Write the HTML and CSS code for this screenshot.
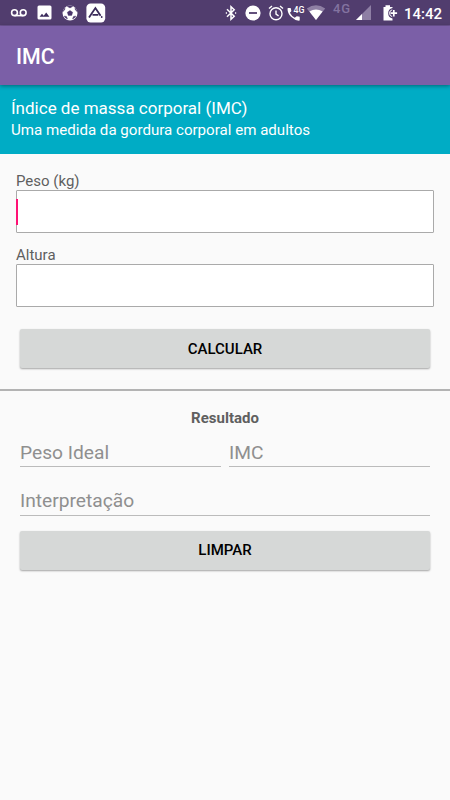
FILE: index.html
```html
<!DOCTYPE html>
<html lang="pt-BR">
<head>
<meta charset="utf-8">
<title>IMC</title>
<link rel="stylesheet" href="styles.css">
</head>
<body>
<div class="status">
  <div class="notifications">
    <svg width="18" height="10" viewBox="0 0 18 10" fill="none" stroke="#fff" stroke-width="1.6"><circle cx="4.500" cy="4.700" r="2.900"/><circle cx="13.200" cy="4.700" r="2.900"/><path d="M4.500 7.600h8.700"/></svg>
    <svg width="15" height="15" viewBox="0 0 15 15"><rect x=".5" y=".5" width="14" height="14" rx="1.5" fill="#fff"/><path d="M2.600 11.800 5 8.800l1.700 2 2.500-3.200 3.200 4.200z" fill="#3c2b5c"/></svg>
    <svg width="16" height="16" viewBox="0 0 16 16"><circle cx="8" cy="8" r="7.500" fill="#fff"/><path d="m8 5.400 2.700 1.900-1 3.100H6.300l-1-3.100zM5.200 1.400 8 2.900l2.800-1.500-2.800-.7zM1 6.500 2.600 5l.5-2.200-1.800 2.400zM15 6.500 13.400 5l-.5-2.200 1.800 2.400zM2.200 11l2.300.4 1 2.500-2-1zM13.800 11l-2.300.4-1 2.500 2-1z" fill="#49346b" stroke="#49346b" stroke-width=".4"/></svg>
    <svg width="20" height="20" viewBox="0 0 20 20"><rect x=".4" y=".4" width="18.800" height="19" rx="4.200" fill="#fff"/><path d="M3 14.500 9.400 5l5.200 7.800M6.500 11.800h5.800" fill="none" stroke="#392a59" stroke-width="1.800"/><circle cx="15.700" cy="14" r=".9" fill="#392a59"/></svg>
  </div>
  <div class="system">
    <svg class="bt" width="12" height="16" viewBox="0 0 12 16" fill="none" stroke="#fff" stroke-width="1.500"><path d="m2 4.300 7.200 7L6 14.300V1.700l3.200 3L2 11.700"/><path d="M.8 8h1.200M10 8h1.200"/></svg>
    <svg class="dnd" width="16" height="16" viewBox="0 0 16 16"><circle cx="8" cy="8" r="7.600" fill="#fff"/><path d="M4 8h8" stroke="#513d6e" stroke-width="1.800"/></svg>
    <svg class="alarm" width="16" height="16" viewBox="0 0 16 16" fill="none" stroke="#fff" stroke-width="1.400"><circle cx="8" cy="8.800" r="6"/><path d="M1 3.500 4 1M12 1l3 2.500M8 5.400v3.800l2.600 1.600"/></svg>
    <svg class="call" width="18" height="18" viewBox="0 0 18 18" fill="#fff"><path d="M1.200 4h2q.6 0 .7.600.1 1 .4 2 .1.400-.2.800L2.900 8.800q1.700 3.300 4.900 4.900l1.500-1.300q.3-.3.800-.2 1 .3 2 .4.600.1.600.7v2.700q0 .7-.7.700Q7.700 16.400 4 12.800.5 9.300.5 4.700.5 4 1.200 4z"/><text class="badge4g" x="6.500" y="9">4G</text></svg>
    <svg class="wifi" width="20" height="16" viewBox="0 0 20 16"><path d="M.8 3.500Q10-3 19.200 3.500L10 15z" fill="#8e7fa4"/><path d="M3.400 6.500Q10 2.500 16.600 6.500L10 15z" fill="#fff"/></svg>
    <span class="network">4G</span>
    <svg class="signal" width="15" height="15" viewBox="0 0 15 15"><path d="M0 15 15 0v15z" fill="#8e7fa4"/><path d="m0 15 6-6v6z" fill="#fff"/></svg>
    <svg class="battery" width="15" height="16" viewBox="0 0 15 16"><path d="M.5 2h2V.3h4.500V2h2.500v1A5.300 5.300 0 0 0 5.200 8.200 5.300 5.300 0 0 0 9.500 13.400v2.100h-9z" fill="#fff"/><path d="M9.200 4.800a3.500 3.500 0 0 0 0 6.800" fill="none" stroke="#fff" stroke-width="1"/><path d="M10.800 4.900v6.600M7.500 8.200h6.600" fill="none" stroke="#fff" stroke-width="1.700"/></svg>
    <span class="clock">14:42</span>
  </div>
</div>
<header class="appbar"><h1>IMC</h1></header>
<section class="banner">
  <h2>Índice de massa corporal (IMC)</h2>
  <p>Uma medida da gordura corporal em adultos</p>
</section>
<main>
  <section class="form">
    <label>Peso (kg)</label>
    <div class="field"><span class="caret"></span></div>
    <label class="second">Altura</label>
    <div class="field"></div>
    <button class="calc">CALCULAR</button>
  </section>
  <div class="divider"></div>
  <section class="result">
    <h3>Resultado</h3>
    <div class="row">
      <div class="line">Peso Ideal</div>
      <div class="line">IMC</div>
    </div>
    <div class="line wide">Interpretação</div>
    <button class="clear">LIMPAR</button>
  </section>
</main>
</body>
</html>
```
FILE: styles.css
```css
* { box-sizing: border-box; }
body {
  margin: 0;
  width: 450px;
  height: 800px;
  overflow: hidden;
  background: #fafafa;
  font-family: Roboto, "Liberation Sans", sans-serif;
}
h1, h2, h3, p { margin: 0; font-weight: 400; }
svg { display: block; flex: none; }
.status {
  height: 26px;
  background: #513d6e;
  border-bottom: 1px solid #6d5494;
  display: flex;
  justify-content: space-between;
  color: #fff;
}
.notifications, .system { display: flex; align-items: center; }
.notifications { padding-left: 10px; gap: 9px; }
.notifications svg:nth-child(3) { margin-left: 1px; }
.notifications svg:nth-child(4) { margin-left: -1px; }
.system { padding-right: 8px; }
.dnd { margin-left: 8px; }
.alarm { margin-left: 7px; }
.call { margin-left: 3px; }
.wifi { margin-left: 1px; }
.badge4g { font: 500 8.8px Roboto, sans-serif; }
.network {
  width: 18px;
  margin: -7px 0 0 7px;
  color: #8373a0;
  font-size: 13px;
  font-weight: 500;
  letter-spacing: .8px;
  line-height: 16px;
}
.signal { margin-left: 5px; }
.battery { margin-left: 12px; }
.clock { margin: 2px 0 0 6px; width: 38px; white-space: nowrap; font-size: 15px; font-weight: 500; line-height: 18px; }
.appbar {
  position: relative;
  height: 59px;
  padding-left: 16px;
  display: flex;
  align-items: center;
  background: #7b5fa7;
  box-shadow: 0 1px 4px rgba(0, 0, 0, .4);
}
.appbar h1 { font-size: 21.4px; font-weight: 500; color: #fff; line-height: 26px; margin-top: 2px; }
.banner {
  height: 69px;
  padding: 13px 11px 0;
  background: #00acc5;
  color: #fff;
}
.banner h2 { font-size: 17px; line-height: 21px; }
.banner p { font-size: 15.1px; line-height: 22px; }
.form { padding: 18px 16px 0; height: 235px; }
label { display: block; height: 19px; font-size: 15px; line-height: 19px; color: #5f5f5f; }
.field {
  height: 43px;
  margin-top: -1px;
  display: flex;
  align-items: center;
  background: #fff;
  border: 1px solid #aaa;
  border-radius: 1px;
}
.caret { width: 2px; height: 26px; margin-left: -1px; background: #ff1175; }
.second { margin-top: 13px; }
button {
  display: block;
  width: 410px;
  height: 39px;
  margin: 0 auto;
  padding: 0;
  border: 0;
  border-radius: 2px;
  background: #d6d8d7;
  box-shadow: 0 1px 2px rgba(0, 0, 0, .35);
  font: 500 15px/40px Roboto, sans-serif;
  color: #000;
}
.calc { margin-top: 22px; }
.divider { height: 2px; background: #b3b3b3; }
.result { padding: 18px 20px 0; color: #8f8f8f; }
.result h3 { font-size: 15px; line-height: 19px; font-weight: 700; text-align: center; color: #5f5f5f; }
.row { display: grid; grid-template-columns: 1fr 1fr; column-gap: 8px; margin-top: 10px; }
.line { height: 29px; font-size: 19.2px; line-height: 30px; border-bottom: 1px solid #bbb; }
.wide { margin-top: 20px; line-height: 28px; }
.clear { margin-top: 15px; line-height: 39px; }
```
